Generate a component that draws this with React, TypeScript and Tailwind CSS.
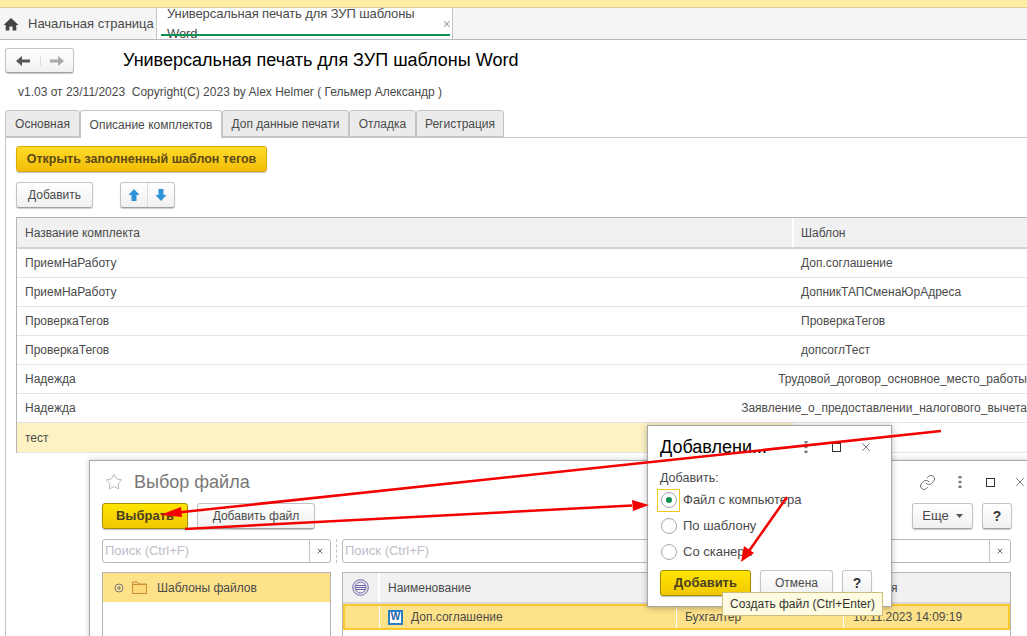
import { Link as LinkIcon, Star, X } from "lucide-react"

const rows = [
  ["ПриемНаРаботу", "Доп.соглашение"],
  ["ПриемНаРаботу", "ДопникТАПСменаЮрАдреса"],
  ["ПроверкаТегов", "ПроверкаТегов"],
  ["ПроверкаТегов", "допсоглТест"],
  ["Надежда", "Трудовой_договор_основное_место_работы"],
  ["Надежда", "Заявление_о_предоставлении_налогового_вычета"],
]

const tabs = [
  { title: "Основная", w: "w-[75px]" },
  { title: "Описание комплектов", w: "w-[142px]", active: true },
  { title: "Доп данные печати", w: "w-[127px]" },
  { title: "Отладка", w: "w-[67px]" },
  { title: "Регистрация", w: "w-[88px]" },
]

const whiteBtn = "flex items-center justify-center rounded-[3px] border border-[#c4c4c4] border-b-[#a0a0a0] bg-gradient-to-b from-white to-[#f1f1f1] text-[#4a4a4a] shadow-[0_1px_1px_rgba(0,0,0,0.2)]"
const yellowBtn = "flex items-center justify-center rounded-[3px] border border-[#a68d00] bg-gradient-to-b from-[#ffe500] to-[#f0c800] font-bold text-[#4a4020] shadow-[0_1px_1px_rgba(0,0,0,0.25)]"

function Kebab() {
  return (
    <svg width="4" height="14" viewBox="0 0 4 14" fill="#777">
      <rect x="0.5" y="1" width="3" height="2.4" />
      <rect x="0.5" y="5.8" width="3" height="2.4" />
      <rect x="0.5" y="10.6" width="3" height="2.4" />
    </svg>
  )
}

function Radio({ label, on }: { label: string; on?: boolean }) {
  return (
    <div className="flex h-[26px] items-center gap-[6px]">
      <span className="flex h-[16px] w-[16px] items-center justify-center rounded-full border border-[#a8a8a8] bg-white">
        {on && <span className="h-[6px] w-[6px] rounded-full bg-[#0f9150]" />}
      </span>
      <span className="text-[13px] text-[#4a4a4a]">{label}</span>
    </div>
  )
}

export default function App() {
  return (
    <div className="relative h-[636px] w-[1027px] overflow-hidden bg-white font-['Liberation_Sans',Arial,sans-serif] text-[12px] text-[#4a4a4a]">
      {/* top strip */}
      <div className="h-[8px] border-b border-[#d8cf9c] bg-[#fdeda0]" />

      {/* open windows bar */}
      <div className="flex h-[32px] border-b border-[#b8b8b8] bg-[#f5f5f5]">
        <div className="flex w-[157px] items-center border-r border-[#c4c4c4] pl-[3px] text-[#4a4a4a]">
          <svg width="16" height="14" viewBox="0 0 16 14" fill="#444">
            <path d="M8 1 L15.5 8 H13.3 V13.5 H9.6 V9.4 H6.4 V13.5 H2.7 V8 H0.5 Z" />
          </svg>
          <span className="ml-[9px] text-[13px]">Начальная страница</span>
        </div>
        <div className="relative flex w-[296px] items-center border-r border-[#c4c4c4] bg-white pl-[10px]">
          <span className="text-[13px] tracking-[-0.1px]">Универсальная печать для ЗУП шаблоны Word</span>
          <X size={10} strokeWidth={3} className="ml-[7px] text-[#a8a8a8]" />
          <div className="absolute bottom-[3px] left-[4px] h-[2px] w-[289px] bg-[#0f9150]" />
        </div>
      </div>

      {/* header of the form */}
      <div className="mt-[8px] flex h-[25px] pl-[5px]">
        <div className={whiteBtn + " h-[25px] w-[69px]"}>
          <div className="flex w-[35px] justify-center border-r border-[#dcdcdc]">
            <svg width="14" height="10" viewBox="0 0 14 10" fill="#555"><path d="M0 5 L6 0 V3.5 H14 V6.5 H6 V10 Z" /></svg>
          </div>
          <div className="flex w-[33px] justify-center">
            <svg width="14" height="10" viewBox="0 0 14 10" fill="#aaa"><path d="M14 5 L8 0 V3.5 H0 V6.5 H8 V10 Z" /></svg>
          </div>
        </div>
        <h1 className="ml-[49px] text-[18px] leading-[24px] text-black">Универсальная печать для ЗУП шаблоны Word</h1>
      </div>
      <div className="mt-[11px] h-[16px] whitespace-pre pl-[18px] leading-[16px]">v1.03 от 23/11/2023  Copyright(C) 2023 by Alex Helmer ( Гельмер Александр )</div>

      {/* page tabs */}
      <div className="mt-[10px] flex h-[27px] pl-[5px]">
        {tabs.map((t) => (
          <div
            key={t.title}
            className={
              t.w +
              " flex items-center justify-center rounded-t-[3px] border border-[#c4c4c4] " +
              (t.active ? "h-[28px] border-b-0 bg-white relative z-10" : "bg-[#ebebeb]")
            }
          >
            {t.title}
          </div>
        ))}
      </div>

      {/* tab content */}
      <div className="ml-[5px] h-[520px] border-l border-t border-[#c4c4c4] pl-[10px] pt-[8px]">
        <div className="flex h-[26px] w-[251px] items-center justify-center rounded-[3px] border border-[#d9a900] bg-gradient-to-b from-[#ffdb29] to-[#f3bd00] text-[12.5px] font-bold text-[#5c4a14] shadow-[0_1px_1px_rgba(0,0,0,0.25)]">
          Открыть заполненный шаблон тегов
        </div>
        <div className="mt-[10px] flex h-[26px]">
          <div className={whiteBtn + " w-[77px]"}>Добавить</div>
          <div className={whiteBtn + " ml-[27px] w-[55px]"}>
            <div className="flex h-full w-[28px] items-center justify-center border-r border-[#dcdcdc]">
              <svg width="12" height="14" viewBox="0 0 12 14" fill="#2f93d8"><path d="M6 1 L11.5 7 H8.5 V13 H3.5 V7 H0.5 Z" /></svg>
            </div>
            <div className="flex h-full w-[27px] items-center justify-center">
              <svg width="12" height="14" viewBox="0 0 12 14" fill="#2f93d8"><path d="M6 13 L11.5 7 H8.5 V1 H3.5 V7 H0.5 Z" /></svg>
            </div>
          </div>
        </div>

        {/* table */}
        <div className="mt-[9px] border-l border-t border-[#b4b4b4]">
          <div className="flex h-[31px] items-center border-b-2 border-[#d2d2d2] bg-[#f1f1f1]">
            <div className="flex h-full w-[777px] items-center border-r-2 border-white pl-[8px]">Название комплекта</div>
            <div className="pl-[7px]">Шаблон</div>
          </div>
          {rows.map((r, i) => (
            <div key={i} className="flex h-[29px] items-center border-b border-[#e4e4e4]">
              <div className="w-[777px] pl-[8px]">{r[0]}</div>
              <div className="whitespace-nowrap pl-[7px]">{r[1]}</div>
            </div>
          ))}
          <div className="flex h-[30px] items-center border-b border-[#e4e4e4]">
            <div className="flex h-full w-[777px] items-center bg-[#fdf2c4] pl-[8px]">тест</div>
          </div>
        </div>
      </div>

      {/* file choice window */}
      <div className="absolute left-[89px] top-[460px] h-[190px] w-[960px] border border-[#a8a8a8] bg-white pl-[12px] shadow-[0_0_6px_rgba(0,0,0,0.2)]">
        <div className="flex h-[42px] items-center">
          <Star size={18} strokeWidth={1} className="ml-[3px] text-[#a0a0a0]" />
          <span className="ml-[11px] text-[18px] text-[#777]">Выбор файла</span>
          <LinkIcon size={17} strokeWidth={1.3} className="ml-[669px] text-[#666]" />
          <div className="ml-[22px] flex"><Kebab /></div>
          <div className="ml-[24px] h-[9px] w-[9px] border border-[#333]" />
          <X size={14} strokeWidth={1.2} className="ml-[18px] text-[#444]" />
        </div>
        <div className="flex h-[26px]">
          <div className={yellowBtn + " w-[86px] text-[13px]"}>Выбрать</div>
          <div className={whiteBtn + " ml-[9px] w-[118px]"}>Добавить файл</div>
          <div className={whiteBtn + " ml-[597px] w-[61px] gap-[7px] text-[13px]"}>
            Еще
            <svg width="7" height="4" viewBox="0 0 7 4" fill="#555"><path d="M0 0 H7 L3.5 4 Z" /></svg>
          </div>
          <div className={whiteBtn + " ml-[9px] w-[30px] text-[14px] font-bold text-[#333]"}>?</div>
        </div>
        <div className="mt-[10px] flex h-[24px]">
          <div className="flex w-[229px] rounded-[3px] border border-[#b8b8b8]">
            <span className="flex-1 pl-[2px] text-[13px] leading-[22px] text-[#c0bcc8]">Поиск (Ctrl+F)</span>
            <span className="flex w-[21px] items-center justify-center border-l border-[#c4c4c4]"><X size={8} strokeWidth={3} className="text-[#666]" /></span>
          </div>
          <div className="ml-[5px] w-0 border-l border-dashed border-[#c4c4c4]" />
          <div className="ml-[5px] flex w-[669px] rounded-[3px] border border-[#b8b8b8]">
            <span className="flex-1 pl-[2px] text-[13px] leading-[22px] text-[#c0bcc8]">Поиск (Ctrl+F)</span>
            <span className="flex w-[21px] items-center justify-center border-l border-[#c4c4c4]"><X size={8} strokeWidth={3} className="text-[#666]" /></span>
          </div>
        </div>
        <div className="mt-[9px] flex">
          <div className="h-[80px] w-[229px] border border-[#b4b4b4]">
            <div className="flex h-[29px] items-center bg-[#fde28a] pl-[11px]">
              <svg width="10" height="10" viewBox="0 0 10 10" fill="none" stroke="#777"><circle cx="5" cy="5" r="4" /><path d="M3 5 H7 M5 3 V7" /></svg>
              <svg className="ml-[8px]" width="15" height="13" viewBox="0 0 15 13" fill="#fbd97a" stroke="#c98f30"><path d="M0.5 12.5 V1 H5.5 L6.5 3 H14.5 V12.5 Z M0.5 3.5 H14.5" /></svg>
              <span className="ml-[10px] text-[#4a4a4a]">Шаблоны файлов</span>
            </div>
          </div>
          <div className="ml-[11px] h-[80px] w-[669px] border border-[#b4b4b4]">
            <div className="flex h-[31px] items-center border-b-2 border-[#d8d8d8] bg-[#f1f1f1]">
              <div className="flex h-full w-[37px] items-center justify-center border-r-2 border-white">
                <svg width="17" height="17" viewBox="0 0 17 17" fill="none" stroke="#6a62a8"><circle cx="8.5" cy="8.5" r="7.8" /><circle cx="8.5" cy="8.5" r="5.5" /><path d="M4 6.5 H13 M3.5 8.5 H13.5 M4 10.5 H13" /></svg>
              </div>
              <div className="pl-[8px]">Наименование</div>
              <div className="ml-[375px] pl-[0px]">создания</div>
            </div>
            <div className="flex h-[26px] items-center border-2 border-[#fcc82e] bg-[#fde28a]">
              <div className="h-full w-[35px] border-r border-white" />
              <div className="flex h-full w-[297px] items-center border-r border-white pl-[8px]">
                <span className="flex h-[15px] w-[15px] items-center justify-center border-2 border-[#2a7cc4] bg-white text-[10px] font-bold leading-none text-[#1f5fa8]">W</span>
                <span className="ml-[8px]">Доп.соглашение</span>
              </div>
              <div className="flex h-full w-[167px] items-center border-r border-white pl-[8px]">Бухгалтер</div>
              <div className="whitespace-nowrap pl-[9px]">10.11.2023 14:09:19</div>
            </div>
          </div>
        </div>
      </div>

      {/* small add dialog */}
      <div className="absolute left-[647px] top-[425px] h-[182px] w-[245px] border border-[#a8a8a8] bg-white pl-[12px] shadow-[0_1px_6px_rgba(0,0,0,0.3)]">
        <div className="flex h-[42px] items-center">
          <span className="w-[144px] text-[18px] text-black">Добавлени...</span>
          <Kebab />
          <div className="ml-[24px] h-[9px] w-[9px] border border-[#333]" />
          <X size={14} strokeWidth={1.2} className="ml-[18px] text-[#444]" />
        </div>
        <div className="mt-[2px] h-[16px] text-[12.5px] leading-[16px]">Добавить:</div>
        <div className="relative mt-[1px]">
          <div className="absolute left-[-3px] top-[2px] h-[23px] w-[23px] border border-[#f5c518]" />
          <div className="pl-[1px]">
            <Radio label="Файл с компьютера" on />
            <Radio label="По шаблону" />
            <Radio label="Со сканера" />
          </div>
        </div>
        <div className="mt-[5px] flex h-[26px]">
          <div className={yellowBtn + " w-[91px] text-[13px]"}>Добавить</div>
          <div className={whiteBtn + " ml-[9px] w-[73px]"}>Отмена</div>
          <div className={whiteBtn + " ml-[9px] w-[30px] text-[14px] font-bold text-[#333]"}>?</div>
        </div>
      </div>

      {/* tooltip */}
      <div className="absolute left-[722px] top-[592px] flex h-[24px] w-[161px] items-center justify-center border border-[#cbbd80] bg-[#fdfbe0] text-[12px] text-[#333]">
        Создать файл (Ctrl+Enter)
      </div>

      {/* red annotation arrows */}
      <svg className="absolute left-0 top-0" width="1027" height="636" fill="none">
        <path d="M941 431 L178 512.5" stroke="#f40000" strokeWidth="2.5" />
        <path d="M160 515 L181 507 L182 517 Z" fill="#f40000" />
        <path d="M185 529 L632 505.5" stroke="#f40000" strokeWidth="2.5" />
        <path d="M649 505 L632 500 L633 511 Z" fill="#f40000" />
        <path d="M787 497 L749 551" stroke="#f40000" strokeWidth="2.5" />
        <path d="M741 562 L744 546 L754 553 Z" fill="#f40000" />
      </svg>
    </div>
  )
}
